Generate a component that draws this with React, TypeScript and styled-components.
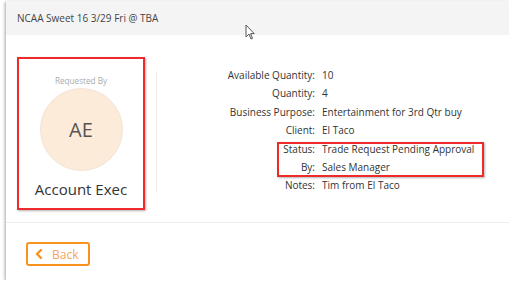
import React from 'react';
import styled, { createGlobalStyle } from 'styled-components';

const GlobalStyle = createGlobalStyle`
  html, body {
    margin: 0;
    padding: 0;
    background: #ffffff;
    font-family: "Open Sans", "Liberation Sans", sans-serif;
    overflow: hidden;
  }
`;

const rows: { label: string; value: string; group?: 'status' }[] = [
  { label: 'Available Quantity:', value: '10' },
  { label: 'Quantity:', value: '4' },
  { label: 'Business Purpose:', value: 'Entertainment for 3rd Qtr buy' },
  { label: 'Client:', value: 'El Taco' },
  { label: 'Status:', value: 'Trade Request Pending Approval', group: 'status' },
  { label: 'By:', value: 'Sales Manager', group: 'status' },
  { label: 'Notes:', value: 'Tim from El Taco' },
];

const Cursor = () => (
  <CursorWrap width="10" height="16" viewBox="0 0 10 16">
    <path d="M1 1 L1 13 L4 10 L6 15 L7.5 14.4 L5.6 9.6 L9.2 9.6 Z" fill="#fff" stroke="#555" strokeWidth="1" strokeLinejoin="round" />
  </CursorWrap>
);

const Chevron = () => (
  <svg width="8" height="10" viewBox="0 0 8 10">
    <path d="M6 1 L2 5 L6 9" fill="none" stroke="#f7931e" strokeWidth="2.4" strokeLinecap="round" strokeLinejoin="round" />
  </svg>
);

const DetailRow = ({ label, value }: { label: string; value: string }) => (
  <Row>
    <Label>{label}</Label>
    <Value>{value}</Value>
  </Row>
);

const App: React.FC = () => {
  const plain = rows.filter((r) => !r.group);
  const status = rows.filter((r) => r.group === 'status');

  return (
    <>
      <GlobalStyle />
      <Card>
        <Header>
          NCAA Sweet 16 3/29 Fri @ TBA
          <Cursor />
        </Header>
        <Body>
          <Requester>
            <RequestedLabel>Requested By</RequestedLabel>
            <Avatar>AE</Avatar>
            <RequesterName>Account Exec</RequesterName>
          </Requester>
          <Divider />
          <Details>
            {plain.slice(0, 4).map((r) => (
              <DetailRow key={r.label} label={r.label} value={r.value} />
            ))}
            <Highlight>
              {status.map((r) => (
                <DetailRow key={r.label} label={r.label} value={r.value} />
              ))}
            </Highlight>
            {plain.slice(4).map((r) => (
              <DetailRow key={r.label} label={r.label} value={r.value} />
            ))}
          </Details>
        </Body>
        <Footer>
          <BackButton>
            <Chevron />
            <span>Back</span>
          </BackButton>
        </Footer>
      </Card>
    </>
  );
};

const Card = styled.div`
  margin: 1px 0 0 6px;
  width: 503px;
  height: 279px;
  background: #fff;
  box-shadow: -1px 1px 3px rgba(0, 0, 0, 0.35);
  display: flex;
  flex-direction: column;
`;

const Header = styled.div`
  position: relative;
  height: 34px;
  background: #f4f4f4;
  display: flex;
  align-items: center;
  padding-left: 11px;
  font-size: 10px;
  color: #444;
`;

const CursorWrap = styled.svg`
  position: absolute;
  left: 239px;
  top: 23px;
`;

const Body = styled.div`
  display: flex;
  padding: 22px 0 0 11px;
  height: 165px;
`;

const Requester = styled.div`
  box-sizing: border-box;
  width: 128px;
  height: 153px;
  border: 2px solid #ee2a2a;
  box-shadow: 1px 1px 2px rgba(0, 0, 0, 0.3);
  display: flex;
  flex-direction: column;
  align-items: center;
  padding-top: 16px;
`;

const RequestedLabel = styled.div`
  font-size: 8.2px;
  color: #aaa;
  line-height: 11px;
`;

const Avatar = styled.div`
  box-sizing: border-box;
  margin-top: 2px;
  width: 83px;
  height: 83px;
  border-radius: 50%;
  background: #fdebd9;
  border: 1px solid #f2e4d6;
  display: flex;
  align-items: center;
  justify-content: center;
  font-size: 20px;
  color: #555;
`;

const RequesterName = styled.div`
  margin-top: 8px;
  font-size: 15px;
  color: #333;
`;

const Divider = styled.div`
  width: 1px;
  margin: 15px 0 0 11px;
  height: 120px;
  background: #ececec;
`;

const Details = styled.div`
  display: flex;
  flex-direction: column;
  margin-top: 9px;
  margin-left: 3px;
`;

const Row = styled.div`
  display: flex;
  gap: 7px;
  height: 18.4px;
  line-height: 18.4px;
  font-size: 10px;
  color: #333;
`;

const Label = styled.div`
  width: 155px;
  text-align: right;
`;

const Value = styled.div`
  white-space: nowrap;
`;

const Highlight = styled.div`
  position: relative;

  &::after {
    content: '';
    position: absolute;
    left: 117px;
    top: 2px;
    width: 207px;
    height: 35px;
    box-sizing: border-box;
    border: 2px solid #ee2a2a;
    box-shadow: 1px 1px 2px rgba(0, 0, 0, 0.3);
  }
`;

const Footer = styled.div`
  border-top: 1px solid #ededed;
  padding: 19px 0 0 20px;
  flex: 1;
`;

const BackButton = styled.button`
  box-sizing: border-box;
  width: 64px;
  height: 24px;
  border: 2px solid #f7931e;
  border-radius: 3px;
  background: #fff;
  display: flex;
  align-items: center;
  gap: 9px;
  padding: 0 0 0 7px;
  font-family: "Open Sans", "Liberation Sans", sans-serif;
  font-size: 12px;
  color: #f5a461;
  cursor: pointer;
`;

export default App;
